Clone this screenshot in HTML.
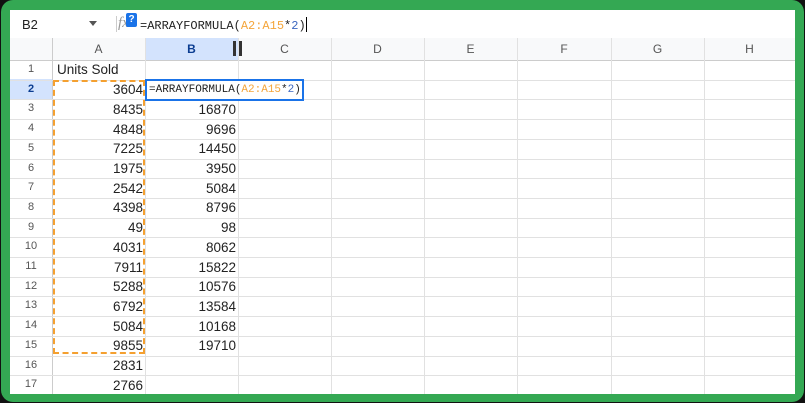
<!DOCTYPE html>
<html><head><style>
*{margin:0;padding:0;box-sizing:border-box}
body{width:805px;height:403px;background:#111;position:relative;overflow:hidden;font-family:"Liberation Sans",Arial,sans-serif}
.frame{position:absolute;left:1px;top:0;width:803px;height:402px;background:#34a853;border-radius:12px}
.sheet{position:absolute;left:10px;top:10px;width:785px;height:384px;background:#fff;overflow:hidden}
.a{position:absolute}
.vl{position:absolute;width:1px;background:#e1e1e1}
.hl{position:absolute;height:1px;background:#e1e1e1;left:0;width:785px}
.ch{position:absolute;top:28px;height:22px;line-height:22px;text-align:center;font-size:12px;color:#555}
.rh{position:absolute;left:0;width:42px;text-align:center;font-size:11px;color:#555}
.num{position:absolute;text-align:right;font-size:13.5px;color:#222}
.mono{font-family:"Liberation Mono",monospace;font-size:11px;white-space:nowrap}
</style></head><body>
<div class="frame"></div>
<div class="sheet">
 <div class="a" style="left:12px;top:7px;font-size:13px;color:#222">B2</div>
 <div class="a" style="left:79px;top:11px;width:0;height:0;border-left:4px solid transparent;border-right:4px solid transparent;border-top:5px solid #555"></div>
 <div class="a" style="left:106px;top:6px;width:1px;height:16px;background:#ccc"></div>
 <div class="a" style="left:108px;top:5px;font-size:15px;font-style:italic;color:#999;font-family:'Liberation Serif',serif">fx</div>
 <div class="a" style="left:116px;top:3px;width:11px;height:14px;background:#1a73e8;border-radius:2px;color:#fff;font-size:10px;font-weight:bold;text-align:center;line-height:14px">?</div>
 <div class="a mono" style="left:130px;top:7px;color:#222;font-size:12px">=ARRAYFORMULA(<span style="color:#f4a53a">A2:A15</span>*<span style="color:#3c67c0">2</span>)<span style="display:inline-block;width:1px;height:15px;background:#000;vertical-align:-3px"></span></div>
 <div class="hl" style="top:28px"></div>
 <div class="a" style="left:0;top:28px;width:785px;height:22px;background:#f8f9fa"></div>
 <div class="a" style="left:135px;top:28px;width:93px;height:22px;background:#d3e3fd"></div>
 <div class="a" style="left:0;top:69px;width:42px;height:20px;background:#d3e3fd"></div>
 <div class="ch" style="left:42px;width:93px">A</div>
 <div class="ch" style="left:135px;width:93px;font-weight:bold;color:#0b3d91">B</div>
 <div class="ch" style="left:228px;width:93px">C</div>
 <div class="ch" style="left:321px;width:93px">D</div>
 <div class="ch" style="left:414px;width:93px">E</div>
 <div class="ch" style="left:507px;width:94px">F</div>
 <div class="ch" style="left:601px;width:93px">G</div>
 <div class="ch" style="left:694px;width:91px">H</div>
 <div class="a" style="left:223px;top:31px;width:3px;height:15px;background:#333"></div>
 <div class="a" style="left:229px;top:31px;width:3px;height:15px;background:#333"></div>
 <div class="hl" style="top:50px;background:#ccc"></div>
 <div id="g"></div>
 <script>
 var g='',cols=[42,135,228,321,414,507,601,694];
 for(var c=0;c<cols.length;c++)g+='<div class="vl" style="left:'+cols[c]+'px;top:28px;height:360px;'+(c==0?'background:#ccc':'')+'"></div>';
 var A=['',3604,8435,4848,7225,1975,2542,4398,49,4031,7911,5288,6792,5084,9855,2831,2766];
 var B=['','',16870,9696,14450,3950,5084,8796,98,8062,15822,10576,13584,10168,19710,'',''];
 for(var r=1;r<=17;r++){var t=50+(r-1)*19.7;
  g+='<div class="hl" style="top:'+(t+19.7).toFixed(1)+'px"></div>';
  g+='<div class="rh" style="top:'+(t+3)+'px;'+(r==2?'font-weight:bold;color:#0b3d91':'')+'">'+r+'</div>';
  if(r>1)g+='<div class="num" style="left:42px;width:91px;top:'+(t+2.5)+'px">'+A[r-1]+'</div>';
  if(B[r-1])g+='<div class="num" style="left:135px;width:91px;top:'+(t+2.5)+'px">'+B[r-1]+'</div>';
 }
 document.getElementById('g').innerHTML=g;
 </script>
 <div class="a" style="left:47px;top:52px;font-size:13.5px;color:#222">Units Sold</div>
 <div class="a" style="left:43px;top:70px;width:92px;height:274px;border:2px dashed #f4a030"></div>
 <div class="a mono" style="left:135px;top:69px;width:159px;height:22px;border:2px solid #1a73e8;background:#fff;line-height:18px;padding-left:2px;color:#222">=ARRAYFORMULA(<span style="color:#f4a53a">A2:A15</span>*<span style="color:#3c67c0">2</span>)</div>
</div>
</body></html>
